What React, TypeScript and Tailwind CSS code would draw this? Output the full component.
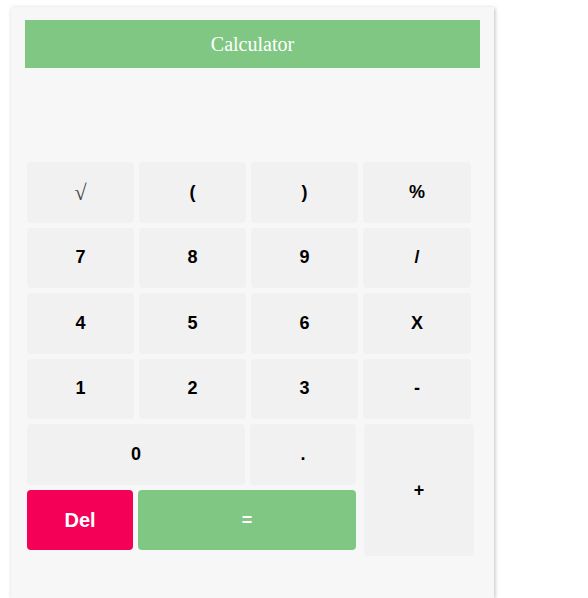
const keys = [
  ['√', '(', ')', '%'],
  ['7', '8', '9', '/'],
  ['4', '5', '6', 'X'],
  ['1', '2', '3', '-'],
]

const btn =
  'flex items-center justify-center rounded-[4px] bg-[#f1f1f1] text-[18px] font-bold text-black'

export default function App() {
  return (
    <div className="min-h-[598px] bg-white pl-[11px] pt-[7px] font-['Liberation_Sans',Arial,sans-serif]">
      <div className="h-[591px] w-[483px] bg-[#f7f7f7] px-[14px] pt-[13px] shadow-[1px_1px_4px_rgba(0,0,0,0.25)]">
        {/* Header */}
        <div className="flex h-[48px] items-center justify-center bg-[#81c784] font-['Liberation_Serif','Times_New_Roman',serif] text-[20px] text-white">
          Calculator
        </div>

        {/* Display */}
        <div className="h-[94px]" />

        {/* Keys */}
        <div className="ml-[2px] w-[447px]">
          <div className="grid grid-cols-[107px_107px_107px_108px] auto-rows-[60.5px] gap-x-[5px] gap-y-[5px]">
            {keys.flat().map((k) => (
              <button
                key={k}
                className={
                  k === '√'
                    ? "flex items-center justify-center rounded-[4px] bg-[#f1f1f1] font-['Liberation_Serif',serif] text-[22px] font-normal text-[#444]"
                    : btn
                }
              >
                {k}
              </button>
            ))}
          </div>

          <div className="mt-[5px] flex gap-x-[8px]">
            <div className="flex w-[329px] flex-col gap-y-[5px]">
              <div className="flex gap-x-[5px]">
                <button className={`${btn} h-[61px] w-[218px]`}>0</button>
                <button className={`${btn} h-[61px] w-[106px]`}>.</button>
              </div>
              <div className="flex gap-x-[5px]">
                <button className="flex h-[60px] w-[106px] items-center justify-center rounded-[4px] bg-[#f50057] text-[20px] font-bold text-white">
                  Del
                </button>
                <button className="flex h-[60px] w-[218px] items-center justify-center rounded-[4px] bg-[#81c784] text-[18px] font-bold text-white">
                  =
                </button>
              </div>
            </div>
            <button className={`${btn} h-[132px] w-[110px]`}>+</button>
          </div>
        </div>
      </div>
    </div>
  )
}
